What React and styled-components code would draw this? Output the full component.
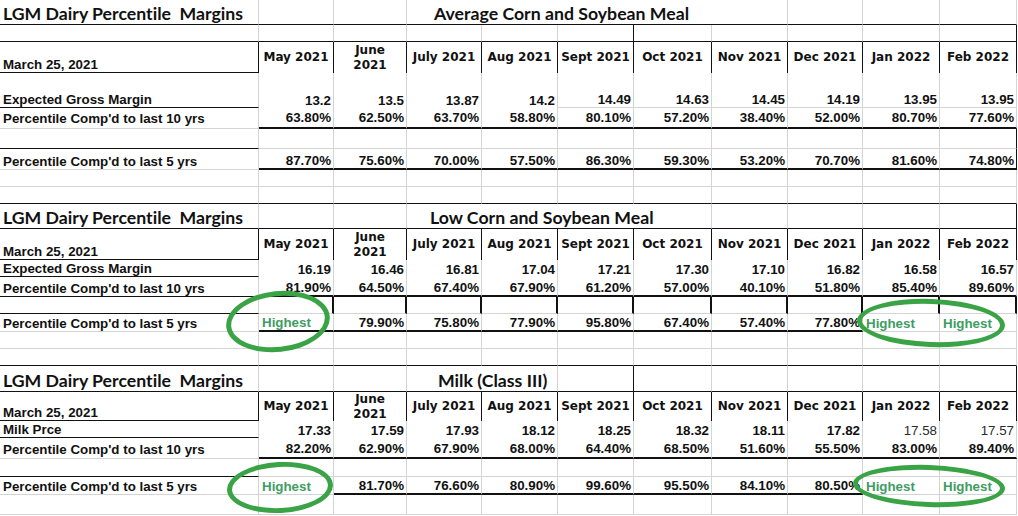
import React from "react";
import styled, { createGlobalStyle } from "styled-components";

const GRID = "#d4d4d4";
const INK = "#111";
const GREEN = "#3f9c62";
const RING = "#3aa346";
const HIGH = "Highest";

const GlobalStyle = createGlobalStyle`
  html, body {
    margin: 0;
    padding: 0;
    background: #fff;
  }
  body {
    width: 1018px;
    height: 516px;
    overflow: hidden;
  }
`;

// undefined -> light gridline, 0 -> nothing, 1/2 -> black rule of that weight
const rule = (w) => (w === undefined ? `1px solid ${GRID}` : w === 0 ? "0" : `${w}px solid ${INK}`);

const Page = styled.div`
  position: relative;
  width: 1018px;
  height: 516px;
  font-family: "Liberation Sans", Arial, sans-serif;
  color: ${INK};
`;

const Block = styled.div`
  display: grid;
  grid-template-columns: 259px 75px 73px 75px 76px 76px 78px 76px 75px 77px 77px;
  grid-template-rows: ${(p) => p.$rows.map((h) => `${h}px`).join(" ")};
`;

const Cell = styled.div`
  box-sizing: border-box;
  display: flex;
  align-items: flex-end;
  min-width: 0;
  white-space: nowrap;
  grid-column: span ${(p) => p.$span || 1};
  border-right: ${(p) => rule(p.$r)};
  border-bottom: ${(p) => rule(p.$b)};
  font-size: 13.33px;
  line-height: 14px;
  font-weight: 700;
  padding-bottom: ${(p) => p.$pb || 0}px;
`;

const Title = styled(Cell)`
  font-family: Lato, "Liberation Sans", sans-serif;
  font-size: 17.7px;
  line-height: 20px;
  font-variant-ligatures: none;
  padding-left: ${(p) => p.$pl || 3}px;
  padding-bottom: 0;
  white-space: pre;
`;

const Label = styled(Cell)`
  padding-left: 3px;
`;

const Month = styled(Cell)`
  align-items: center;
  justify-content: center;
  text-align: center;
  padding: 0;
  font-family: "DejaVu Sans", Verdana, sans-serif;
  font-size: 12px;
  line-height: 15px;
  white-space: normal;
`;

const Value = styled(Cell)`
  justify-content: flex-end;
  padding-right: 2px;
  font-weight: ${(p) => (p.$light ? 400 : 700)};
  color: ${(p) => (p.$light ? "#2a2a2a" : INK)};
`;

const High = styled(Cell)`
  padding-left: 3px;
  color: ${GREEN};
`;

const Ring = styled.div`
  position: absolute;
  left: ${(p) => p.$x}px;
  top: ${(p) => p.$y}px;
  width: ${(p) => p.$w}px;
  height: ${(p) => p.$h}px;
  box-sizing: border-box;
  border: 5px solid ${RING};
  border-radius: 50%;
  transform: rotate(${(p) => p.$tilt || 0}deg);
  pointer-events: none;
`;

const MONTHS = [
  "May 2021", "June 2021", "July 2021", "Aug 2021", "Sept 2021",
  "Oct 2021", "Nov 2021", "Dec 2021", "Jan 2022", "Feb 2022",
];

const EMPTY = Array(10).fill("");
const pick = (v, i) => (Array.isArray(v) ? v[i] : v);

const Row = ({ label = "", labelB, labelR, values = EMPTY, b, r, lastR, light = [], pb }) => (
  <>
    <Label $b={labelB} $r={labelR} $pb={pb}>{label}</Label>
    {values.map((v, i) => {
      const rr = i === 9 && lastR !== undefined ? lastR : pick(r, i);
      if (v === HIGH) {
        return <High key={i} $b={pick(b, i)} $r={rr} $pb={pb}>{v}</High>;
      }
      return (
        <Value key={i} $b={pick(b, i)} $r={rr} $pb={pb} $light={light.includes(i)}>
          {v}
        </Value>
      );
    })}
  </>
);

const HeaderRow = () => (
  <>
    <Label $b={1} $r={1}>March 25, 2021</Label>
    {MONTHS.map((m) => (
      <Month key={m} $r={1} $b={0}>
        {m === "June 2021" ? <>June<br />2021</> : m}
      </Month>
    ))}
  </>
);

const App = () => (
  <Page>
    <GlobalStyle />

    <Block $rows={[25, 17, 31, 35, 21, 20, 21, 17, 17]}>
      <Title $b={1}>LGM Dairy Percentile  Margins</Title>
      <Cell $b={1} />
      <Cell $b={1} />
      <Title $b={1} $span={5} $pl={27}>Average Corn and Soybean Meal</Title>
      <Cell $b={1} />
      <Cell $b={1} />
      <Cell $b={1} />

      <Row labelB={1} b={1} r={[undefined, undefined, undefined, undefined, 1]} lastR={1} />
      <HeaderRow />
      <Row
        label="Expected Gross Margin"
        labelB={1}
        values={["13.2", "13.5", "13.87", "14.2", "14.49", "14.63", "14.45", "14.19", "13.95", "13.95"]}
        b={[0, 0, 0, 0]}
      />
      <Row
        label="Percentile Comp'd to last 10 yrs"
        values={["63.80%", "62.50%", "63.70%", "58.80%", "80.10%", "57.20%", "38.40%", "52.00%", "80.70%", "77.60%"]}
        b={2}
        pb={2}
      />
      <Row labelB={1} lastR={1} />
      <Row
        label="Percentile Comp'd to last 5 yrs"
        values={["87.70%", "75.60%", "70.00%", "57.50%", "86.30%", "59.30%", "53.20%", "70.70%", "81.60%", "74.80%"]}
        b={2}
        lastR={1}
      />
      <Row />
      <Row labelB={1} b={1} />
    </Block>

    <Block $rows={[25, 31, 17, 20, 17, 18, 17, 17]}>
      <Title $b={1}>LGM Dairy Percentile  Margins</Title>
      <Cell $b={1} />
      <Cell $b={1} />
      <Title $b={1} $span={4} $pl={23}>Low Corn and Soybean Meal</Title>
      <Cell $b={1} />
      <Cell $b={1} />
      <Cell $b={1} />
      <Cell $b={1} $r={1} />

      <HeaderRow />
      <Row
        label="Expected Gross Margin"
        labelB={1}
        values={["16.19", "16.46", "16.81", "17.04", "17.21", "17.30", "17.10", "16.82", "16.58", "16.57"]}
        b={0}
      />
      <Row
        label="Percentile Comp'd to last 10 yrs"
        labelB={1}
        values={["81.90%", "64.50%", "67.40%", "67.90%", "61.20%", "57.00%", "40.10%", "51.80%", "85.40%", "89.60%"]}
        b={2}
      />
      <Row labelB={1} r={2} />
      <Row
        label="Percentile Comp'd to last 5 yrs"
        values={[HIGH, "79.90%", "75.80%", "77.90%", "95.80%", "67.40%", "57.40%", "77.80%", HIGH, HIGH]}
        b={[2, 2, 2, 2, 2, 2, 2, 2]}
      />
      <Row />
      <Row labelB={1} b={1} />
    </Block>

    <Block $rows={[26, 29, 17, 21, 18, 18, 20]}>
      <Title $b={1}>LGM Dairy Percentile  Margins</Title>
      <Cell $b={1} />
      <Cell $b={1} />
      <Title $b={1} $span={2} $pl={31}>Milk (Class III)</Title>
      <Cell $b={1} $r={1} />
      <Cell $b={1} />
      <Cell $b={1} />
      <Cell $b={1} />
      <Cell $b={1} />
      <Cell $b={1} $r={1} />

      <HeaderRow />
      <Row
        label="Milk Prce"
        labelB={1}
        values={["17.33", "17.59", "17.93", "18.12", "18.25", "18.32", "18.11", "17.82", "17.58", "17.57"]}
        b={0}
        light={[8, 9]}
      />
      <Row
        label="Percentile Comp'd to last 10 yrs"
        values={["82.20%", "62.90%", "67.90%", "68.00%", "64.40%", "68.50%", "51.60%", "55.50%", "83.00%", "89.40%"]}
        b={2}
        pb={1}
      />
      <Row labelB={1} />
      <Row
        label="Percentile Comp'd to last 5 yrs"
        values={[HIGH, "81.70%", "76.60%", "80.90%", "99.60%", "95.50%", "84.10%", "80.50%", HIGH, HIGH]}
        b={[undefined, 2, 2, 2, 2, 2, 2, 2]}
      />
      <Row />
    </Block>

    <Ring $x={226} $y={291} $w={104} $h={61} $tilt={-6} />
    <Ring $x={857} $y={299} $w={148} $h={48} $tilt={2} />
    <Ring $x={227} $y={462} $w={106} $h={51} $tilt={-3} />
    <Ring $x={853} $y={465} $w={152} $h={42} $tilt={2} />
  </Page>
);

export default App;
